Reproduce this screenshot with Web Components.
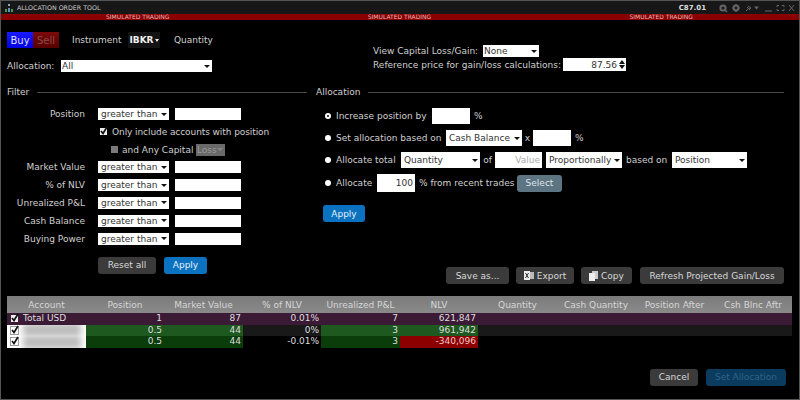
<!DOCTYPE html>
<html>
<head>
<meta charset="utf-8">
<style>
  html, body { margin: 0; padding: 0; background: #000; }
  body { font: 9px "DejaVu Sans", sans-serif; color: #d0d0d0; }
</style>
</head>
<body>
<alloc-window></alloc-window>
<script>
const CHECK = '<svg width="9" height="9" viewBox="0 0 9 9" style="display:block;margin:-2px 0 0 -1px;overflow:visible"><path d="M2 5l2 2.500L8 1" fill="none" stroke="#111" stroke-width="1.700"/></svg>';

class UiSelect extends HTMLElement {
  constructor() {
    super();
    this.attachShadow({ mode: 'open' });
  }
  connectedCallback() {
    const w = this.getAttribute('w') || 71;
    const h = this.getAttribute('h') || 12;
    this.shadowRoot.innerHTML = `
      <style>
        :host { display: inline-flex; align-items: center; box-sizing: border-box; width: ${w}px; height: ${h}px;
          background: #fff; color: #333; padding: 0 2px 0 3px; flex: none; font-size: 9px; }
        :host([tight]) { padding-left: 1px; }
        :host([off]) { background: #6a6a6a; color: #999; }
        .t { flex: 1; min-width: 0; white-space: nowrap; overflow: hidden; }
        .c { flex: none; width: 0; height: 0; border: 3px solid transparent; border-top: 3px solid #111; border-bottom: 0; }
        :host([off]) .c { border-top-color: #888; }
      </style>
      <span class="t"><slot></slot></span><span class="c"></span>`;
  }
}
customElements.define('ui-select', UiSelect);

class UiInput extends HTMLElement {
  constructor() {
    super();
    this.attachShadow({ mode: 'open' });
  }
  connectedCallback() {
    const w = this.getAttribute('w') || 66;
    const h = this.getAttribute('h') || 12;
    this.shadowRoot.innerHTML = `
      <style>
        :host { display: inline-flex; align-items: center; justify-content: flex-end; box-sizing: border-box;
          width: ${w}px; height: ${h}px; background: #fff; color: #333; padding: 0 2px; flex: none; font-size: 9px; }
        :host([ph]) { color: #aaa; }
      </style>
      <slot></slot>`;
  }
}
customElements.define('ui-input', UiInput);

class UiBtn extends HTMLElement {
  constructor() {
    super();
    this.attachShadow({ mode: 'open' });
  }
  connectedCallback() {
    const w = this.getAttribute('w') || 58;
    this.shadowRoot.innerHTML = `
      <style>
        :host { display: inline-flex; align-items: center; justify-content: center; gap: 2px; box-sizing: border-box;
          width: ${w}px; height: 17px; border-radius: 3px; background: #3b3b3b; color: #d8d8d8; flex: none; font-size: 9px; white-space: nowrap; }
        :host([kind=blue]) { background: #0b72bf; color: #e4f0fa; }
        :host([kind=slate]) { background: #5d7482; color: #dfe6ea; }
        :host([kind=off]) { background: #0b3b5e; color: #2f6489; }
      </style>
      <slot></slot>`;
  }
}
customElements.define('ui-btn', UiBtn);

class SectionHead extends HTMLElement {
  constructor() {
    super();
    this.attachShadow({ mode: 'open' });
  }
  connectedCallback() {
    this.shadowRoot.innerHTML = `
      <style>
        :host { display: flex; align-items: center; gap: 8px; height: 12px; color: #d0d0d0; }
        i { flex: 1; height: 1px; background: #4a4a4a; }
      </style>
      <slot></slot><i></i>`;
  }
}
customElements.define('section-head', SectionHead);

class TitleBar extends HTMLElement {
  constructor() {
    super();
    this.attachShadow({ mode: 'open' });
  }
  connectedCallback() {
    this.shadowRoot.innerHTML = `
      <style>
        :host { display: flex; align-items: center; height: 13px; padding: 0 4px 0 4px; background: #171717; color: #ccc; font-size: 6.300px; }
        .name { margin-left: 4px; flex: 1; }
        .sym { font-weight: bold; font-size: 7px; color: #ddd; margin-right: 13px; }
        svg { display: block; }
      </style>
      <svg width="8" height="8" viewBox="0 0 8 8"><rect x="3" y="0" width="2" height="2" fill="#7fa9c9"/><rect x="0" y="5" width="2" height="3" fill="#3f9a5a"/><rect x="3" y="4" width="2" height="4" fill="#5f8fc0"/><rect x="6" y="5" width="2" height="3" fill="#3f9a5a"/></svg>
      <span class="name">ALLOCATION ORDER TOOL</span>
      <span class="sym">C87.01</span>
      <svg width="76" height="10" viewBox="0 0 76 10" fill="none" stroke="#666">
        <circle cx="4" cy="5" r="2.600" stroke-width="2"/><path d="M6 7l2 2" stroke-width="1.400"/>
        <circle cx="17" cy="5" r="2.400" stroke-width="2"/><path d="M17 1v1.400M17 7.600V9M13 5h1.400M19.600 5H21" stroke-width="1.200"/>
        <path d="M27 8l2-2M28 4l3 3M29 3l3 2-2 1" stroke-width="1"/>
        <path d="M35 3.500h5l-2.500 3z" fill="#666" stroke="none"/>
        <path d="M46 8h7" stroke-width="1"/>
        <path d="M58 4V2.500h2M63 2.500h2V4M65 6v1.500h-2M60 7.500h-2V6" stroke-width="1"/>
        <path d="M70 2l5 6M75 2l-5 6" stroke-width="1"/>
      </svg>`;
  }
}
customElements.define('title-bar', TitleBar);

class SimBand extends HTMLElement {
  constructor() {
    super();
    this.attachShadow({ mode: 'open' });
  }
  connectedCallback() {
    const label = '<span>SIMULATED TRADING</span>';
    this.shadowRoot.innerHTML = `
      <style>
        :host { display: flex; justify-content: space-between; align-items: center; height: 6px; padding: 0 106px 0 105px;
          background: #8a0000; color: #e6b8b8; font-size: 6px; line-height: 6px; }
      </style>
      ${label}${label}${label}`;
  }
}
customElements.define('sim-band', SimBand);

class OrderHead extends HTMLElement {
  constructor() {
    super();
    this.attachShadow({ mode: 'open' });
  }
  connectedCallback() {
    this.shadowRoot.innerHTML = `
      <style>
        :host { display: flex; padding-top: 12px; }
        .left { width: 366px; display: flex; flex-direction: column; gap: 12px; }
        .right { padding-top: 13px; display: flex; flex-direction: column; gap: 1px; }
        .row { display: flex; align-items: center; }
        .tog { display: flex; width: 52px; height: 16px; }
        .buy { flex: 1; background: linear-gradient(#1a1aff, #0000e0); color: #dde; display: flex; align-items: center; justify-content: center; font-size: 10px; }
        .sell { flex: 1; background: linear-gradient(#7a0a0a, #560000); color: #8a4a4a; display: flex; align-items: center; justify-content: center; font-size: 10px; }
        .inst { margin-left: 13px; width: 56px; }
        .ibkr { width: 32px; height: 16px; background: #131313; color: #eee; font-weight: bold; display: flex; align-items: center; justify-content: center; gap: 1px; margin-right: 14px; }
        .ibkr i { width: 0; height: 0; border: 2.500px solid transparent; border-top: 3px solid #eee; border-bottom: 0; }
        .alloc { width: 54px; }
        .view { width: 110px; }
        .ref { width: 190px; }
        .spin { width: 8px; height: 13px; display: flex; flex-direction: column; align-items: center; justify-content: center; gap: 1px; background: #fff; margin-left: -8px; position: relative; }
        .spin b { width: 0; height: 0; border: 3px solid transparent; }
        .spin .u { border-bottom: 4px solid #111; border-top: 0; }
        .spin .d { border-top: 4px solid #111; border-bottom: 0; }
      </style>
      <div class="left">
        <div class="row">
          <div class="tog"><span class="buy">Buy</span><span class="sell">Sell</span></div>
          <span class="inst">Instrument</span>
          <span class="ibkr">IBKR<i></i></span>
          <span>Quantity</span>
        </div>
        <div class="row"><span class="alloc">Allocation:</span><ui-select w="151" tight>All</ui-select></div>
      </div>
      <div class="right">
        <div class="row"><span class="view">View Capital Loss/Gain:</span><ui-select w="56" tight>None</ui-select></div>
        <div class="row"><span class="ref">Reference price for gain/loss calculations:</span><ui-input w="63" h="13" style="padding-right:9px">87.56</ui-input><span class="spin"><b class="u"></b><b class="d"></b></span></div>
      </div>`;
  }
}
customElements.define('order-head', OrderHead);

class FilterPanel extends HTMLElement {
  constructor() {
    super();
    this.attachShadow({ mode: 'open' });
  }
  connectedCallback() {
    const row = (label) => `<span class="l">${label}</span><ui-select>greater than</ui-select><ui-input></ui-input>`;
    this.shadowRoot.innerHTML = `
      <style>
        :host { display: block; width: 300px; flex: none; }
        .grid { display: grid; grid-template-columns: 78px 90px 66px; row-gap: 5.800px; margin-top: 10px; align-items: center; }
        .grid > ui-select { margin-left: 13px; }
        .l { text-align: right; white-space: nowrap; }
        .wide { grid-column: 2 / 4; display: flex; align-items: center; height: 12px; white-space: nowrap; }
        .cb { width: 7px; height: 7px; background: #eee; margin-right: 5px; flex: none; }
        .cb.off { background: #7a7a7a; margin-right: 4px; }
        .one { padding-left: 15px; letter-spacing: -0.080px; }
        .two { padding-left: 26px; }
        .two span:nth-child(2) { width: 74px; flex: none; }
        .btns { display: flex; gap: 8px; margin: 12px 0 0 91px; }
      </style>
      <section-head>Filter</section-head>
      <div class="grid">
        ${row('Position')}
        <span></span><div class="wide one"><span class="cb">${CHECK}</span>Only include accounts with position</div>
        <span></span><div class="wide two"><span class="cb off"></span><span>and Any Capital</span><ui-select off w="29" tight>Loss</ui-select></div>
        ${row('Market Value')}
        ${row('% of NLV')}
        ${row('Unrealized P&amp;L')}
        ${row('Cash Balance')}
        ${row('Buying Power')}
      </div>
      <div class="btns"><ui-btn w="58">Reset all</ui-btn><ui-btn w="43" kind="blue">Apply</ui-btn></div>`;
  }
}
customElements.define('filter-panel', FilterPanel);

class AllocPanel extends HTMLElement {
  constructor() {
    super();
    this.attachShadow({ mode: 'open' });
  }
  connectedCallback() {
    const radio = '<span class="r"></span>';
    this.shadowRoot.innerHTML = `
      <style>
        :host { display: flex; flex-direction: column; width: 468px; flex: none; }
        .body { padding-left: 9px; }
        .row { display: flex; align-items: center; white-space: nowrap; height: 16px; }
        .one { margin-top: 10px; }
        .two, .three { margin-top: 6px; }
        .four { margin-top: 6px; height: 18px; }
        .r { width: 6px; height: 6px; border-radius: 50%; background: #fff; margin: 0 5px 0 0; flex: none; }
        .r.on { box-sizing: border-box; background: #000; border: 2px solid #fff; }
        .tx { flex: none; }
        .go { margin: 13px 0 0 -2px; }
        .acts { display: flex; gap: 7px; justify-content: flex-end; margin-top: 45px; }
        .acts ui-btn { gap: 3px; }
        .acts ui-btn:last-child { margin-left: 1px; }
        svg { display: block; }
      </style>
      <section-head>Allocation</section-head>
      <div class="body">
        <div class="row one"><span class="r on"></span><span class="tx" style="width:96px">Increase position by</span><ui-input w="38" h="16"></ui-input><span class="tx" style="margin-left:4px">%</span></div>
        <div class="row two">${radio}<span class="tx" style="width:110px">Set allocation based on</span><ui-select w="76" h="16">Cash Balance</ui-select><span class="tx" style="width:11px;text-align:center">x</span><ui-input w="38" h="16"></ui-input><span class="tx" style="margin-left:4px">%</span></div>
        <div class="row three">${radio}<span class="tx" style="width:65px">Allocate total</span><ui-select w="79" h="16">Quantity</ui-select><span class="tx" style="width:15px;text-align:center">of</span><ui-input w="47" h="16" ph>Value</ui-input><span style="width:4px"></span><ui-select w="76" h="16">Proportionally</ui-select><span class="tx" style="width:50px;padding-left:4px;box-sizing:border-box">based on</span><ui-select w="75" h="16">Position</ui-select></div>
        <div class="row four">${radio}<span class="tx" style="width:41px">Allocate</span><ui-input w="38" h="18">100</ui-input><span class="tx" style="width:102px;padding-left:4px;box-sizing:border-box">% from recent trades</span><ui-btn w="45" kind="slate">Select</ui-btn></div>
        <div class="go"><ui-btn w="42" kind="blue">Apply</ui-btn></div>
      </div>
      <div class="acts">
        <ui-btn w="63">Save as...</ui-btn>
        <ui-btn w="58"><svg width="10" height="9" viewBox="0 0 10 9"><rect x="4" y="1" width="6" height="7" fill="#bbb"/><rect x="0" y="0" width="6" height="9" fill="#eee"/><path d="M1.500 2l3 5M4.500 2l-3 5" stroke="#333" fill="none"/></svg>Export</ui-btn>
        <ui-btn w="51"><svg width="9" height="10" viewBox="0 0 9 10"><rect x="3" y="0" width="6" height="8" fill="#ccc"/><rect x="0" y="2" width="6" height="8" fill="#eee"/></svg>Copy</ui-btn>
        <ui-btn w="144">Refresh Projected Gain/Loss</ui-btn>
      </div>`;
  }
}
customElements.define('alloc-panel', AllocPanel);

class AcctTable extends HTMLElement {
  constructor() {
    super();
    this.attachShadow({ mode: 'open' });
  }
  connectedCallback() {
    const heads = ['Account', 'Position', 'Market Value', '% of NLV', 'Unrealized P&amp;L', 'NLV', 'Quantity', 'Cash Quantity', 'Position After', 'Csh Blnc Aftr'];
    const blank = '<span></span><span></span><span></span><span></span>';
    const rows = [
      { cls: 'tot', name: 'Total USD', vals: [['1'], ['87'], ['0.01%'], ['7'], ['621,847']] },
      { cls: 'a', vals: [['0.5', 'g1'], ['44', 'g1'], ['0%'], ['3', 'g1'], ['961,942', 'g1']] },
      { cls: 'b', vals: [['0.5', 'g2'], ['44', 'g2'], ['-0.01%'], ['3', 'g2'], ['-340,096', 'red']] }
    ];
    const body = rows.map(r => `
      <div class="row ${r.cls}">
        <span class="acct ${r.name ? '' : 'hid'}"><span class="cb">${CHECK}</span>${r.name || '<i class="blur"></i>'}</span>
        ${r.vals.map(v => `<span class="v ${v[1] || ''}">${v[0]}</span>`).join('')}
        ${blank}
      </div>`).join('');
    this.shadowRoot.innerHTML = `
      <style>
        :host { display: block; width: 785px; }
        .row, .head { display: grid; grid-template-columns: 79px 78px 79px 78px 79px 78px 79px 78px 79px 78px; }
        .head { height: 17px; background: linear-gradient(#7b7b7b, #8a8a8a); color: #d6d6d6; align-items: center; text-align: center; }
        .row { height: 11.500px; line-height: 11.500px; color: #ddd; }
        .v { text-align: right; padding-right: 2px; }
        .tot { background: #3b1a36; }
        .a { background: #191919; }
        .b { background: #000; }
        .g1 { background: #1e5a20; }
        .g2 { background: #0a3d0a; }
        .red { background: #8c0000; color: #f0c8c8; }
        .acct { display: flex; align-items: center; gap: 5px; padding-left: 4px; overflow: hidden; white-space: nowrap; }
        .hid { background: #fff; }
        .cb { width: 7px; height: 7px; background: #eee; flex: none; }
        .hid .cb { background: #fff; box-shadow: 0 0 0 1px #999; }
        .blur { display: block; width: 58px; height: 14px; background: #bdbdbd; filter: blur(3px); }
      </style>
      <div class="head">${heads.map(h => `<span>${h}</span>`).join('')}</div>
      ${body}`;
  }
}
customElements.define('acct-table', AcctTable);

class AllocWindow extends HTMLElement {
  constructor() {
    super();
    this.attachShadow({ mode: 'open' });
  }
  connectedCallback() {
    this.shadowRoot.innerHTML = `
      <style>
        :host { display: flex; flex-direction: column; box-sizing: border-box; width: 800px; height: 400px; overflow: hidden;
          background: #000; border: 1px solid #555; }
        .pad { padding-left: 6px; }
        .panels { display: flex; gap: 9px; margin-top: 14px; }
        acct-table { margin-top: 12px; }
        .foot { display: flex; justify-content: flex-end; gap: 8px; margin-top: 21px; padding-right: 13px; }
      </style>
      <title-bar></title-bar>
      <sim-band></sim-band>
      <order-head class="pad"></order-head>
      <div class="panels pad"><filter-panel></filter-panel><alloc-panel></alloc-panel></div>
      <div class="pad"><acct-table></acct-table></div>
      <div class="foot"><ui-btn w="48">Cancel</ui-btn><ui-btn w="80" kind="off">Set Allocation</ui-btn></div>`;
  }
}
customElements.define('alloc-window', AllocWindow);
</script>
</body>
</html>
